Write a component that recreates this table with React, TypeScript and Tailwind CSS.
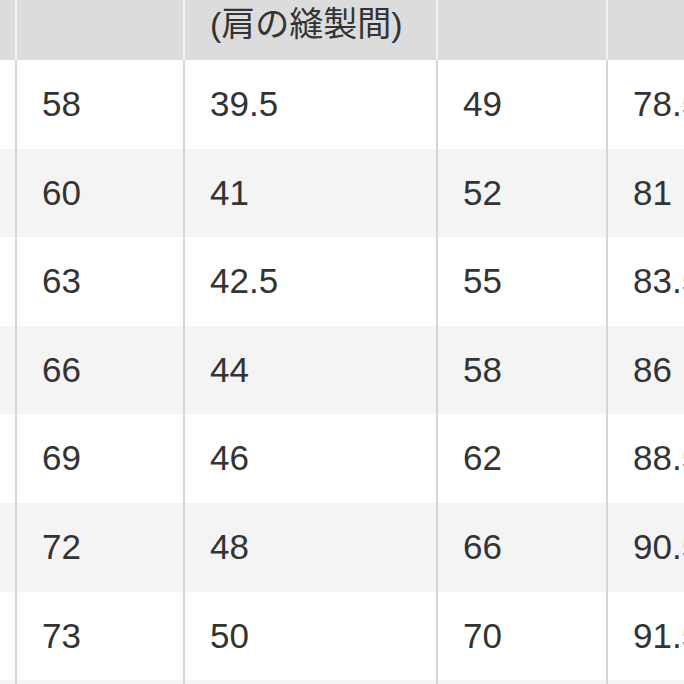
const rows = [
  ["58", "39.5", "49", "78.5"],
  ["60", "41", "52", "81"],
  ["63", "42.5", "55", "83.5"],
  ["66", "44", "58", "86"],
  ["69", "46", "62", "88.5"],
  ["72", "48", "66", "90.5"],
  ["73", "50", "70", "91.5"],
];

const cols = "grid grid-cols-[17px_168px_253px_170px_220px]";

export default function App() {
  return (
    <div className="w-[684px] h-[684px] overflow-hidden bg-white font-['Liberation_Sans','Noto_Sans_CJK_JP',sans-serif] text-[#333]">
      <div className={`${cols} h-[60px] bg-[#dcdcdc]`}>
        <div className="border-r-2 border-[#f2f2f2]" />
        <div className="border-r-2 border-[#f2f2f2]" />
        <div className="border-r-2 border-[#f2f2f2] flex items-end pb-[16px] pl-[25px] text-[34px] leading-[40px] whitespace-nowrap">
          (肩の縫製間)
        </div>
        <div className="border-r-2 border-[#f2f2f2]" />
        <div />
      </div>
      {rows.map((r, i) => (
        <div
          key={i}
          className={`${cols} h-[88.6px] ${i % 2 === 1 ? "bg-[#f4f4f4]" : "bg-white"}`}
        >
          <div className="border-r-2 border-[#d6d6d6]" />
          {r.map((v, j) => (
            <div
              key={j}
              className={`flex items-center pl-[25px] text-[35px] whitespace-nowrap ${j < 3 ? "border-r-2 border-[#d6d6d6]" : ""}`}
            >
              {v}
            </div>
          ))}
        </div>
      ))}
      <div className={`${cols} h-[20px] bg-[#f4f4f4]`}>
        <div className="border-r-2 border-[#d6d6d6]" />
        <div className="border-r-2 border-[#d6d6d6]" />
        <div className="border-r-2 border-[#d6d6d6]" />
        <div className="border-r-2 border-[#d6d6d6]" />
        <div />
      </div>
    </div>
  );
}
